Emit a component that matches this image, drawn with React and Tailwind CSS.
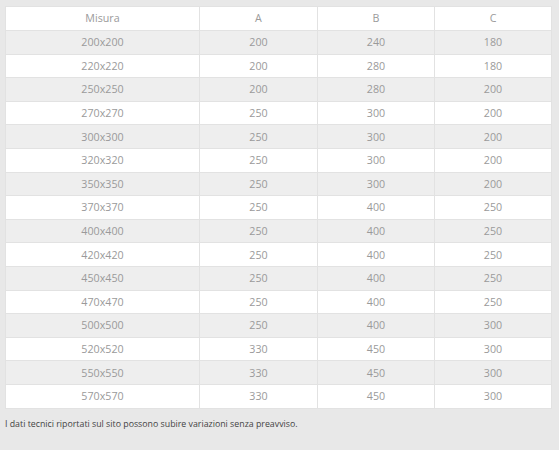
import React from "react";

const rows = [
  ["200x200", 200, 240, 180],
  ["220x220", 200, 280, 180],
  ["250x250", 200, 280, 200],
  ["270x270", 250, 300, 200],
  ["300x300", 250, 300, 200],
  ["320x320", 250, 300, 200],
  ["350x350", 250, 300, 200],
  ["370x370", 250, 400, 250],
  ["400x400", 250, 400, 250],
  ["420x420", 250, 400, 250],
  ["450x450", 250, 400, 250],
  ["470x470", 250, 400, 250],
  ["500x500", 250, 400, 300],
  ["520x520", 330, 450, 300],
  ["550x550", 330, 450, 300],
  ["570x570", 330, 450, 300],
];

const App = () => {
  return (
    <div
      className="w-[559px] h-[450px] bg-[#e8e8e8] pt-[6px] pl-[5px]"
      style={{ fontFamily: '"Open Sans", sans-serif' }}
    >
      <table className="w-[546px] border-collapse text-[10.7px] text-[#9a9a9a] table-fixed">
        <colgroup>
          <col className="w-[194px]" />
          <col className="w-[118px]" />
          <col className="w-[117px]" />
          <col className="w-[117px]" />
        </colgroup>
        <thead>
          <tr className="bg-white h-[24px]">
            {["Misura", "A", "B", "C"].map((h) => (
              <th key={h} className="font-normal text-center border border-[#e2e2e2] p-0">
                {h}
              </th>
            ))}
          </tr>
        </thead>
        <tbody>
          {rows.map((r, i) => (
            <tr key={r[0]} className={`h-[23.6px] ${i % 2 === 0 ? "bg-[#eeeeee]" : "bg-white"}`}>
              {r.map((c, j) => (
                <td key={j} className="text-center border border-[#e2e2e2] p-0">
                  {c}
                </td>
              ))}
            </tr>
          ))}
        </tbody>
      </table>
      <p className="mt-[9px] text-[8.8px] text-[#444]">
        I dati tecnici riportati sul sito possono subire variazioni senza preavviso.
      </p>
    </div>
  );
};

export default App;
